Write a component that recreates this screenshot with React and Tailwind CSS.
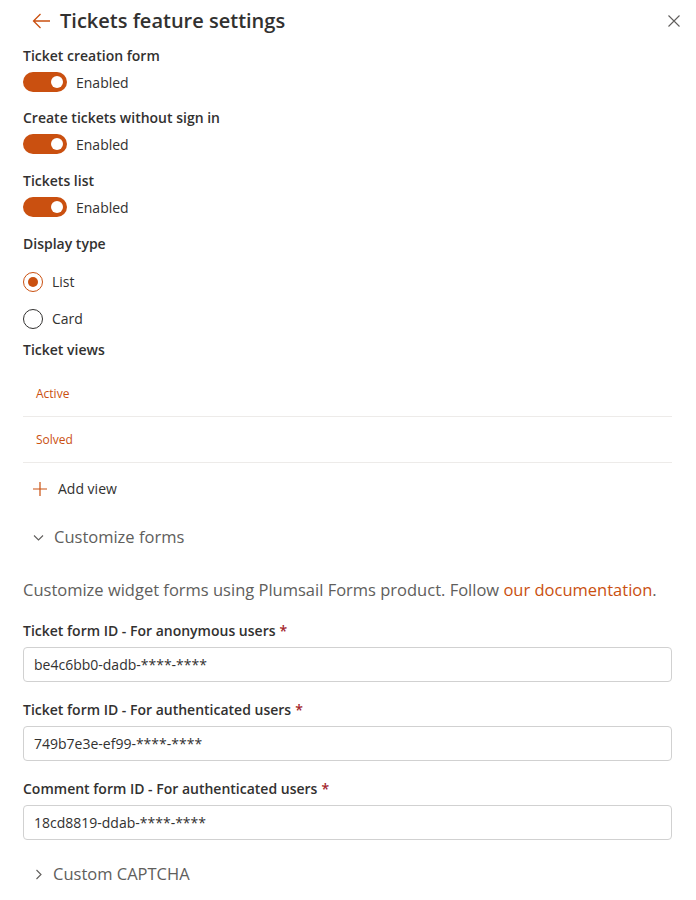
import React, { useState } from 'react';

const font = { fontFamily: '"Open Sans", "Noto Sans", sans-serif' };

function Toggle({ on, onChange }) {
  return (
    <div className="flex items-center gap-[9px] h-[28px]">
      <button
        type="button"
        onClick={onChange}
        className={`w-[44px] h-[20px] rounded-full flex items-center px-[4px] ${on ? 'bg-[#ca5010] justify-end' : 'bg-white border border-[#605e5c] justify-start'}`}
      >
        <span className={`block w-[12px] h-[12px] rounded-full ${on ? 'bg-white' : 'bg-[#605e5c]'}`}></span>
      </button>
      <span className="text-[14px] text-[#323130]">{on ? 'Enabled' : 'Disabled'}</span>
    </div>
  );
}

function Radio({ checked, label, onClick }) {
  return (
    <div className="flex items-center gap-[9px] h-[37px] cursor-pointer" onClick={onClick}>
      <span className={`w-[20px] h-[20px] rounded-full border flex items-center justify-center ${checked ? 'border-[#ca5010]' : 'border-[#323130]'}`}>
        {checked && <span className="w-[10px] h-[10px] rounded-full bg-[#ca5010]"></span>}
      </span>
      <span className="text-[14px] text-[#323130]">{label}</span>
    </div>
  );
}

function Field({ label, value }) {
  return (
    <div className="flex flex-col">
      <label className="text-[14px] font-semibold text-[#323130] h-[24px] flex items-center">
        {label}
        <span className="text-[#a4262c] ml-[4px]">*</span>
      </label>
      <input
        readOnly
        value={value}
        className="mt-[4px] h-[35px] w-full border border-[#d1d1d1] rounded-[4px] px-[10px] text-[14px] text-[#323130] outline-none"
        style={font}
      />
    </div>
  );
}

export default function App() {
  const [toggles, setToggles] = useState({ form: true, anon: true, list: true });
  const [display, setDisplay] = useState('list');
  const [formsOpen, setFormsOpen] = useState(true);

  const flip = (k) => setToggles({ ...toggles, [k]: !toggles[k] });

  return (
    <div className="w-[696px] min-h-[900px] bg-white pl-[23px] pr-[24px]" style={font}>
      {/* Header */}
      <div className="flex items-center h-[42px]">
        <button className="ml-[9px] mr-[9px] text-[#ca5010]">
          <svg width="19" height="16" viewBox="0 0 19 16" fill="none" stroke="currentColor" strokeWidth="1.3">
            <path d="M18 8H1.5M8.5 1L1.5 8l7 7" />
          </svg>
        </button>
        <h1 className="text-[20px] font-semibold text-[#323130] flex-1">Tickets feature settings</h1>
        <button className="text-[#605e5c] mr-[-8px]">
          <svg width="12" height="12" viewBox="0 0 12 12" stroke="currentColor" strokeWidth="1.1">
            <path d="M0.5 0.5l11 11M11.5 0.5l-11 11" />
          </svg>
        </button>
      </div>

      {/* Toggles */}
      <div className="text-[14px] font-semibold text-[#323130] h-[26px] flex items-center">Ticket creation form</div>
      <Toggle on={toggles.form} onChange={() => flip('form')} />
      <div className="text-[14px] font-semibold text-[#323130] h-[34px] flex items-end pb-[2px]">Create tickets without sign in</div>
      <Toggle on={toggles.anon} onChange={() => flip('anon')} />
      <div className="text-[14px] font-semibold text-[#323130] h-[35px] flex items-end pb-[2px]">Tickets list</div>
      <Toggle on={toggles.list} onChange={() => flip('list')} />

      {/* Display type */}
      <div className="text-[14px] font-semibold text-[#323130] h-[35px] flex items-end pb-[2px]">Display type</div>
      <div className="pt-[7px]">
        <Radio checked={display === 'list'} label="List" onClick={() => setDisplay('list')} />
        <Radio checked={display === 'card'} label="Card" onClick={() => setDisplay('card')} />
      </div>

      {/* Ticket views */}
      <div className="text-[14px] font-semibold text-[#323130] h-[24px] flex items-center">Ticket views</div>
      <div className="mt-[10px]">
        {['Active', 'Solved'].map((v) => (
          <div key={v} className="h-[46px] border-b border-[#edebe9] pl-[13px] flex items-center text-[12px] text-[#ca5010]">
            {v}
          </div>
        ))}
      </div>
      <button className="flex items-center h-[51px] pl-[9px] gap-[10px]">
        <svg width="16" height="16" viewBox="0 0 16 16" stroke="#ca5010" strokeWidth="1.2">
          <path d="M8 1v14M1 8h14" />
        </svg>
        <span className="text-[14px] text-[#323130]">Add view</span>
      </button>

      {/* Customize forms */}
      <button onClick={() => setFormsOpen(!formsOpen)} className="flex items-center h-[46px] pl-[10px] gap-[10px]">
        <svg width="11" height="11" viewBox="0 0 11 11" fill="none" stroke="#605e5c" strokeWidth="1.1" className={formsOpen ? '' : '-rotate-90'}>
          <path d="M1 3.5l4.5 4.5 4.5-4.5" />
        </svg>
        <span className="text-[16.5px] text-[#605e5c]">Customize forms</span>
      </button>

      {formsOpen && (
        <div className="pt-[18px]">
          <p className="text-[16.5px] text-[#605e5c] mb-[16px]">
            Customize widget forms using Plumsail Forms product. Follow{' '}
            <a className="text-[#ca5010]">our documentation</a>.
          </p>
          <div className="flex flex-col gap-[16px]">
            <Field label="Ticket form ID - For anonymous users" value="be4c6bb0-dadb-****-****" />
            <Field label="Ticket form ID - For authenticated users" value="749b7e3e-ef99-****-****" />
            <Field label="Comment form ID - For authenticated users" value="18cd8819-ddab-****-****" />
          </div>
        </div>
      )}

      <button className="flex items-center h-[46px] mt-[12px] pl-[12px] gap-[10px]">
        <svg width="8" height="11" viewBox="0 0 8 11" fill="none" stroke="#605e5c" strokeWidth="1.1">
          <path d="M1.5 1l4.5 4.5-4.5 4.5" />
        </svg>
        <span className="text-[16.5px] text-[#605e5c]">Custom CAPTCHA</span>
      </button>
    </div>
  );
}
